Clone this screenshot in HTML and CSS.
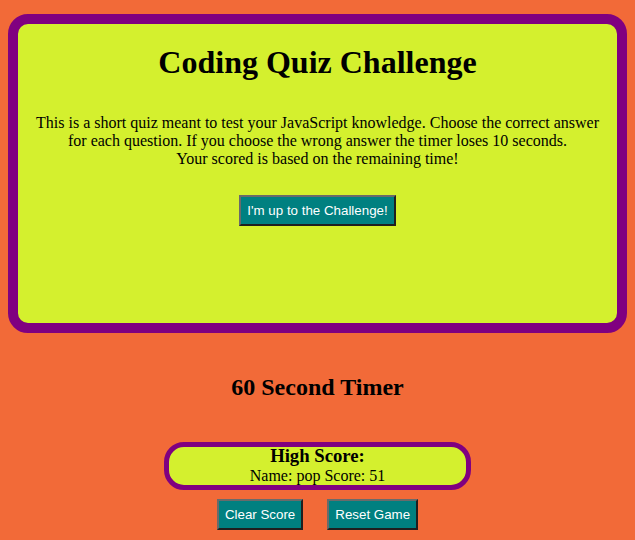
FILE: index.html
```html
<!DOCTYPE html>
<html lang="en">
<head>
<meta charset="utf-8">
<title>Coding Quiz Challenge</title>
<link rel="stylesheet" href="styles.css">
</head>
<body>
  <main class="quiz-card">
    <h1 class="quiz-title">Coding Quiz Challenge</h1>
    <p class="quiz-intro">This is a short quiz meant to test your JavaScript knowledge. Choose the correct answer for each question. If you choose the wrong answer the timer loses 10 seconds.<br>Your scored is based on the remaining time!</p>
    <button class="btn">I'm up to the Challenge!</button>
  </main>
  <h2 class="timer">60 Second Timer</h2>
  <section class="score-card">
    <h3 class="score-title">High Score:</h3>
    <p class="score-line">Name: pop Score: 51</p>
  </section>
  <div class="actions">
    <button class="btn">Clear Score</button>
    <button class="btn">Reset Game</button>
  </div>
</body>
</html>
```
FILE: styles.css
```css
html, body {
  background: #f26a38;
}
body {
  margin: 0;
  padding: 14px 8px 0;
  font-family: "Liberation Serif", "Times New Roman", serif;
  color: #000;
  text-align: center;
}
.quiz-card {
  background: #d4f02e;
  border: 10px solid #800080;
  border-radius: 20px;
  height: 299px;
  box-sizing: content-box;
  padding: 0 12px;
}
.quiz-title {
  font-size: 32px;
  font-weight: bold;
  margin: 20px 0 33px;
  line-height: 37px;
}
.quiz-intro {
  font-size: 16px;
  line-height: 18px;
  margin: 0 0 27px;
}
.btn {
  font-family: "Liberation Sans", Arial, sans-serif;
  font-size: 13.33px;
  line-height: 15px;
  color: #fff;
  background: #008080;
  border: 2px solid;
  border-color: #6a6a6a #1f1f1f #1f1f1f #6a6a6a;
  padding: 6px 6px;
  margin: 0;
  cursor: pointer;
}
.timer {
  font-size: 24px;
  font-weight: bold;
  line-height: 28px;
  margin: 40px 0 41px;
}
.score-card {
  width: 297px;
  margin: 0 auto;
  background: #d4f02e;
  border: 5px solid #800080;
  border-radius: 20px;
  padding: 0;
}
.score-title {
  font-size: 18.72px;
  font-weight: bold;
  line-height: 18px;
  margin: 0;
}
.score-line {
  font-size: 16px;
  line-height: 18px;
  margin: 2px 0 0;
}
.actions {
  display: flex;
  justify-content: center;
  gap: 24px;
  margin-top: 9px;
}
```
